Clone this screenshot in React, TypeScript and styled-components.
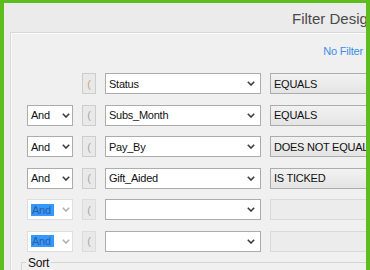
import React from "react";
import styled, { createGlobalStyle } from "styled-components";

const Global = createGlobalStyle`
  html, body { margin: 0; padding: 0; background: #5cbd1c; }
  body { font-family: "Liberation Sans", Arial, sans-serif; }
  * { box-sizing: border-box; }
`;

const Frame = styled.div`
  width: 370px;
  height: 270px;
  background: #5cbd1c;
  padding: 3px 4px 0 4px;
`;

const Window = styled.div`
  width: 100%;
  height: 100%;
  background: #ebebeb;
  overflow: hidden;
  display: flex;
  flex-direction: column;
`;

const Header = styled.div`
  height: 29px;
  flex: none;
  display: flex;
  align-items: center;
  padding-left: 288px;
  padding-top: 1px;
  white-space: nowrap;
`;

const Title = styled.span`
  font-family: "Liberation Sans", Arial, sans-serif;
  font-size: 15px;
  color: #4a4a4a;
`;

const Panel = styled.div`
  flex: 1;
  margin-left: 6px;
  background: #f0f0f0;
  border-top: 1px solid #d8d8d8;
  border-left: 1px solid #d8d8d8;
  box-shadow: inset 1px 1px 0 #fafafa;
  display: flex;
  flex-direction: column;
  min-width: 0;
`;

const NoFilterBar = styled.div`
  height: 40px;
  display: flex;
  align-items: center;
  justify-content: flex-end;
  padding: 0 3px 4px 0;
`;

const NoFilter = styled.span`
  font-size: 11px;
  color: #3b8fe8;
  letter-spacing: -0.2px;
`;

const Rows = styled.div`
  display: flex;
  flex-direction: column;
  gap: 10.5px;
  padding-left: 16px;
`;

const Row = styled.div`
  display: grid;
  grid-template-columns: 46px 14px 156px 120px;
  column-gap: 9px;
  height: 21px;
`;

const Box = styled.div<{ $variant: "white" | "op" | "disabled" | "faint" }>`
  height: 21px;
  display: flex;
  align-items: center;
  position: relative;
  padding-left: 3px;
  font-size: 11px;
  letter-spacing: -0.25px;
  color: #111;
  white-space: nowrap;
  overflow: hidden;
  border: 1px solid
    ${(p) =>
      p.$variant === "white" || p.$variant === "op"
        ? "#acacac"
        : p.$variant === "faint"
        ? "#dedede"
        : "#d9d9d9"};
  background: ${(p) =>
    p.$variant === "op"
      ? "linear-gradient(#f2f2f2, #e4e4e4)"
      : p.$variant === "disabled"
      ? "#ececec"
      : "#ffffff"};
`;

const Chevron = styled.svg<{ $right: number; $light?: boolean }>`
  position: absolute;
  right: ${(p) => p.$right}px;
  top: 7px;
  width: 8px;
  height: 5px;
  stroke: ${(p) => (p.$light ? "#b0b0b0" : "#3c3c3c")};
  stroke-width: 1.6;
  fill: none;
`;

const Paren = styled.div<{ $tint?: boolean; $faint?: boolean }>`
  height: 21px;
  border: 1px solid ${(p) => (p.$faint ? "#dcdcdc" : "#cdcdcd")};
  background: #e9e9e9;
  display: flex;
  align-items: center;
  justify-content: center;
  font-size: 11px;
  color: ${(p) => (p.$tint ? "#c9a27e" : "#a8a8a8")};
`;

const Highlight = styled.span`
  background: #3399ff;
  color: #2f5d9e;
  padding: 0 3px 0 1px;
  line-height: 12px;
`;

const Empty = styled.div``;

const SortGroup = styled.fieldset`
  margin: 4px 0 0 10px;
  padding: 0 0 0 4px;
  border: none;
  border-top: 1px solid #d5d5d5;
  border-left: 1px solid #d5d5d5;
  flex: 1;
`;

const Legend = styled.legend`
  padding: 0 2px;
  font-size: 12px;
  color: #111;
  letter-spacing: -0.2px;
  margin-top: -2px;
`;

const Chev = ({ right, light }: { right: number; light?: boolean }) => (
  <Chevron $right={right} $light={light} viewBox="0 0 8 5">
    <polyline points="0.8,0.8 4,4 7.2,0.8" />
  </Chevron>
);

type R = { and?: "normal" | "sel"; field: string; op?: string; tint?: boolean };

const rows: R[] = [
  { field: "Status", op: "EQUALS", tint: true },
  { and: "normal", field: "Subs_Month", op: "EQUALS" },
  { and: "normal", field: "Pay_By", op: "DOES NOT EQUAL" },
  { and: "normal", field: "Gift_Aided", op: "IS TICKED" },
  { and: "sel", field: "" },
  { and: "sel", field: "" },
];

export default function App() {
  return (
    <>
      <Global />
      <Frame>
        <Window>
          <Header>
            <Title>Filter Designer</Title>
          </Header>
          <Panel>
            <NoFilterBar>
              <NoFilter>No Filter</NoFilter>
            </NoFilterBar>
            <Rows>
              {rows.map((r, i) => (
                <Row key={i}>
                  {r.and === "normal" ? (
                    <Box $variant="white">
                      And
                      <Chev right={2} />
                    </Box>
                  ) : r.and === "sel" ? (
                    <Box $variant="faint">
                      <Highlight>And</Highlight>
                      <Chev right={2} light />
                    </Box>
                  ) : (
                    <Empty />
                  )}
                  <Paren $tint={r.tint} $faint={r.and === "sel"}>(</Paren>
                  <Box $variant="white">
                    {r.field}
                    <Chev right={5} />
                  </Box>
                  {r.op ? (
                    <Box $variant="op">{r.op}</Box>
                  ) : (
                    <Box $variant="disabled" />
                  )}
                </Row>
              ))}
            </Rows>
            <SortGroup>
              <Legend>Sort</Legend>
            </SortGroup>
          </Panel>
        </Window>
      </Frame>
    </>
  );
}
